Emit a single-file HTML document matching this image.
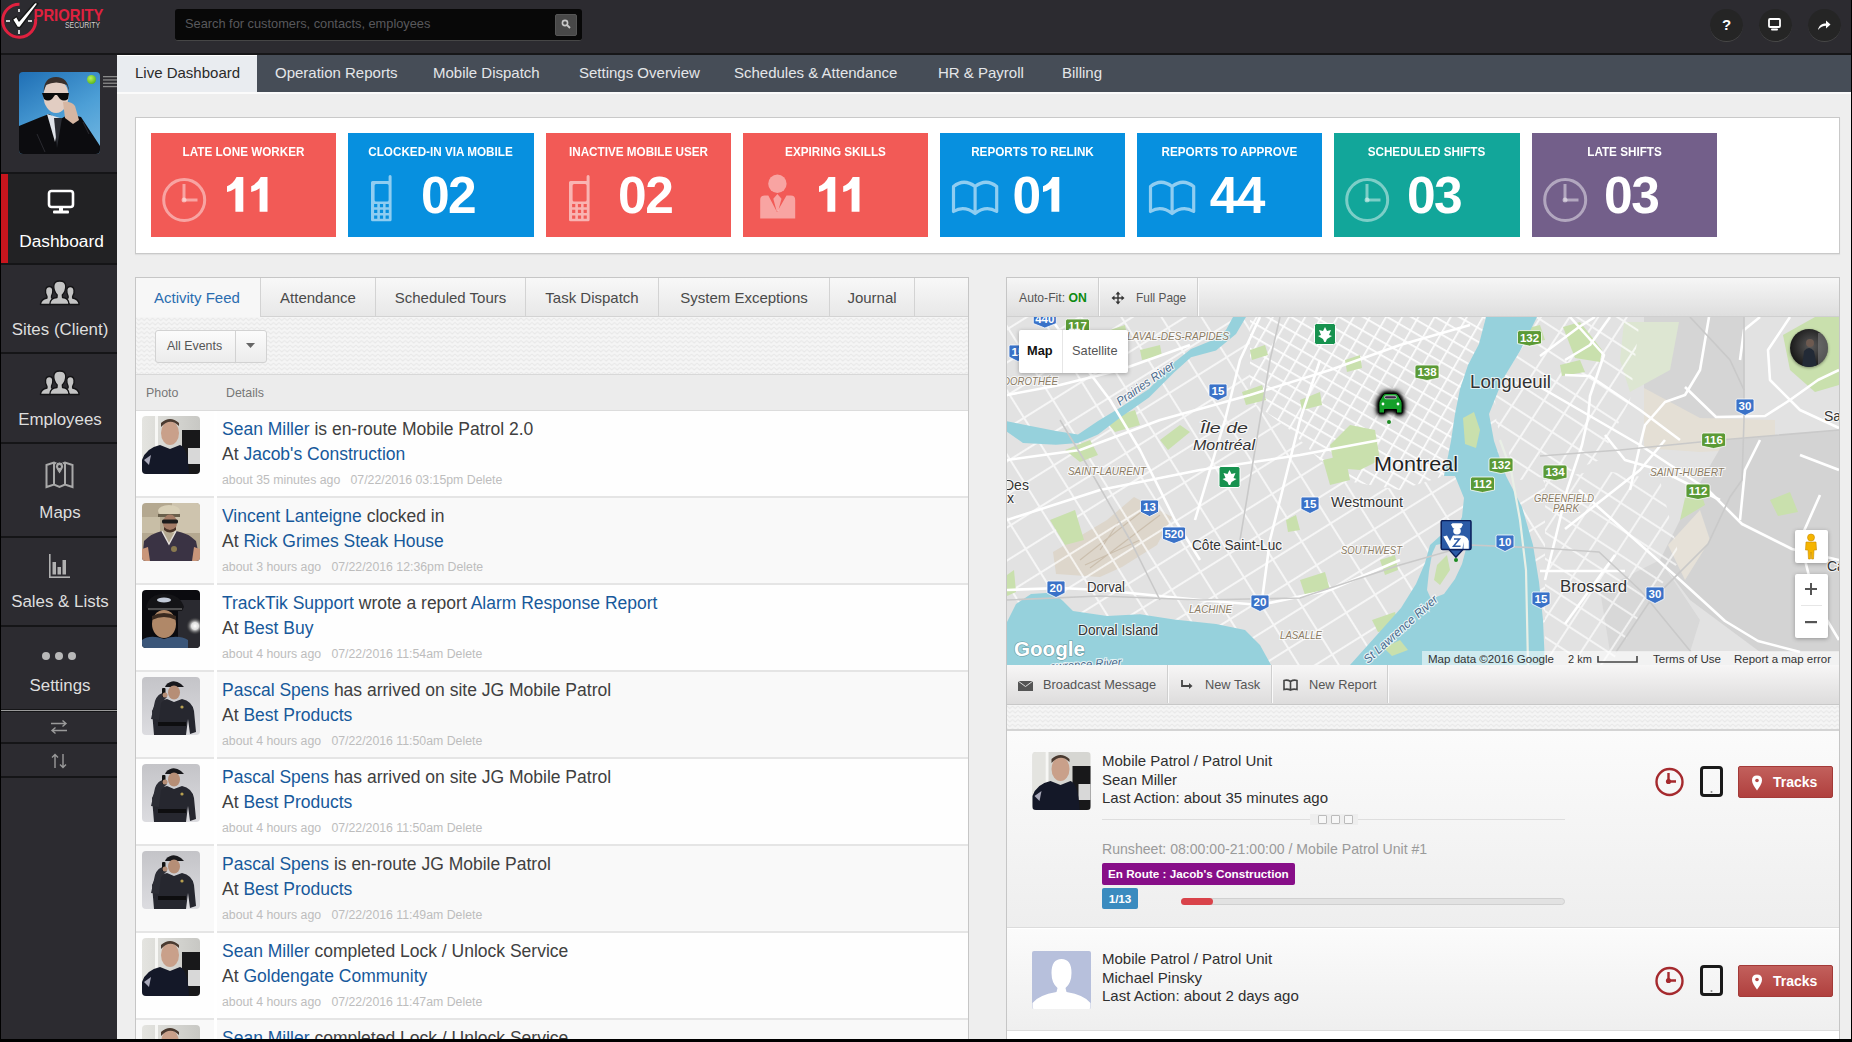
<!DOCTYPE html>
<html><head><meta charset="utf-8">
<style>
*{box-sizing:border-box;margin:0;padding:0}
html,body{width:1852px;height:1042px;overflow:hidden;background:#000}
body{font-family:"Liberation Sans",sans-serif;position:relative}
.abs{position:absolute}
#top{left:1px;top:0;width:1850px;height:53px;background:#2c2b30}
#topline{left:1px;top:53px;width:1850px;height:2px;background:#161618}
#side{left:1px;top:55px;width:116px;height:984px;background:#2c2b30}
#tabbar{left:117px;top:55px;width:1734px;height:37px;background:#464d57}
#content{left:117px;top:92px;width:1734px;height:947px;background:#eeeeee;border-top:2px solid #fbfbfb}
.ttab{position:absolute;top:54px;height:37px;color:#e4e6e9;font-size:15px;line-height:37px;white-space:nowrap}
.sec{position:absolute;left:1px;width:116px;background:#2c2b30;border-bottom:2px solid #151517}
.lbl{position:absolute;left:2px;width:116px;text-align:center;white-space:nowrap;color:#dedede;font-size:16.9px;line-height:20px}
.sec svg{position:absolute}
.panel{position:absolute;background:#fff;border:1px solid #c9c9c9;box-shadow:0 1px 1px rgba(0,0,0,.06)}
.tile{position:absolute;top:133px;width:185.3px;height:104px;color:#fff}
.tile .t{position:absolute;top:11px;left:0;width:185px;text-align:center;font-size:13px;font-weight:bold;white-space:nowrap;line-height:16px;transform:scaleX(.9)}
.tile .n{position:absolute;left:72.5px;top:32px;font-size:51.5px;font-weight:bold;line-height:60px;letter-spacing:-1.5px}
.tile svg{position:absolute}

.fp{position:absolute;left:135px;top:277px;width:834px;height:770px;background:#fff;border:1px solid #c6c6c6}
.ftab{position:absolute;top:278px;height:39px;border-left:1px solid #d3d3d3;background:linear-gradient(#f8f8f8,#e8e8e8);border-bottom:1px solid #d3d3d3;color:#4a4a4a;font-size:15px;line-height:39px;text-align:center;white-space:nowrap}
.zig{background-color:#eeeeee;background-image:repeating-linear-gradient(45deg,rgba(255,255,255,.25) 0 2px,transparent 2px 5px),repeating-linear-gradient(-45deg,rgba(255,255,255,.25) 0 2px,transparent 2px 5px)}
.row{position:absolute;left:136px;width:832px;height:87px;border-bottom:2px solid #e5e5e5}
.row .ph{position:absolute;left:6px;top:5px;width:58px;height:58px;border-radius:4px;overflow:hidden}
.row .div{position:absolute;left:78px;top:0;width:3px;height:87px;background:#fff !important}
.row .l1,.row .l2{position:absolute;left:86px;font-size:17.5px;color:#404040;white-space:nowrap;line-height:20px}
.row .l1{top:8px}.row .l2{top:33px}
.row .l3{position:absolute;left:86px;top:62px;font-size:12.3px;color:#bdbdbd;white-space:nowrap;line-height:14px}
.lk{color:#17599b}
</style></head><body>
<svg width="0" height="0" style="position:absolute"><defs><pattern id="zz" width="5.5" height="4.5" patternUnits="userSpaceOnUse"><path d="M0 1 L2.75 3.5 L5.5 1" fill="none" stroke="#e6e6e6" stroke-width="1"/></pattern></defs></svg>
<div class="abs" id="top"></div>
<div class="abs" id="topline"></div>
<div class="abs" id="side"></div>
<div class="abs" id="tabbar"></div>
<div class="abs" id="content"></div>

<!-- LOGO -->
<svg class="abs" style="left:0;top:0" width="115" height="45" viewBox="0 0 115 45">
  <path d="M19.5 4.2 A16.5 16.5 0 1 0 35.6 19.2" fill="none" stroke="#e0213f" stroke-width="3"/>
  <g stroke="#cfcfcf" stroke-width="2"><line x1="19" y1="9" x2="19" y2="12"/><line x1="19" y1="30" x2="19" y2="34"/><line x1="6" y1="21" x2="10" y2="21"/><line x1="28" y1="21" x2="32" y2="21"/></g>
  <path d="M12.5 19.5 L16.5 16.5 L19 21 L35 2.5 L38 3.5 L20 27.5 L17.5 27.5 Z" fill="#fff" stroke="#151515" stroke-width="1.3" stroke-linejoin="round"/>
  <text x="33.5" y="20.6" font-family="Liberation Sans" font-weight="bold" font-size="16.5" fill="#e0213f" textLength="70" lengthAdjust="spacingAndGlyphs">PRIORITY</text>
  <text x="65" y="27.8" font-family="Liberation Sans" font-size="9" fill="#d4d4d4" stroke="#111" stroke-width=".4" paint-order="stroke" textLength="35" lengthAdjust="spacingAndGlyphs">SECURITY</text>
</svg>

<!-- SEARCH -->
<div class="abs" style="left:175px;top:9px;width:407px;height:32px;background:#080808;border-radius:3px;border-bottom:1px solid #464646"></div>
<div class="abs" style="left:185px;top:16px;font-size:12.8px;color:#58585c;line-height:16px;white-space:nowrap">Search for customers, contacts, employees</div>
<div class="abs" style="left:555px;top:14px;width:22px;height:22px;background:#484848;border-radius:2px;border:1px solid #555"></div>
<svg class="abs" style="left:559px;top:17px" width="14" height="14" viewBox="0 0 14 14"><circle cx="6" cy="6" r="2.6" fill="none" stroke="#c8c8c8" stroke-width="1.6"/><line x1="8" y1="8" x2="11" y2="11" stroke="#c8c8c8" stroke-width="1.8"/></svg>

<!-- top right circles -->
<div class="abs" style="left:1710px;top:9px;width:33px;height:33px;border-radius:50%;background:#252525;border-bottom:1px solid #474747"></div>
<div class="abs" style="left:1759px;top:9px;width:33px;height:33px;border-radius:50%;background:#252525;border-bottom:1px solid #474747"></div>
<div class="abs" style="left:1808px;top:9px;width:33px;height:33px;border-radius:50%;background:#252525;border-bottom:1px solid #474747"></div>
<div class="abs" style="left:1710px;top:15px;width:33px;text-align:center;color:#fff;font-weight:bold;font-size:15px;line-height:20px">?</div>
<svg class="abs" style="left:1767px;top:17px" width="16" height="16" viewBox="0 0 16 16"><rect x="2" y="2" width="11" height="8" rx="1" fill="none" stroke="#fff" stroke-width="1.8"/><rect x="4" y="11.5" width="7" height="2" rx="1" fill="#fff"/></svg>
<svg class="abs" style="left:1816px;top:17px" width="16" height="16" viewBox="0 0 16 16"><path d="M2 13 C3 8 6 6.5 10 6.5 L10 3.5 L14.5 7.5 L10 11.5 L10 8.8 C7 8.8 4.5 9.8 2 13 Z" fill="#fff"/></svg>

<!-- TAB BAR -->
<div class="abs" style="left:117px;top:55px;width:140px;height:37px;background:#e9ecf0;border-top:1px solid #fff"></div>
<div class="ttab" style="left:135px;color:#2a2a2a">Live Dashboard</div>
<div class="ttab" style="left:275px">Operation Reports</div>
<div class="ttab" style="left:433px">Mobile Dispatch</div>
<div class="ttab" style="left:579px">Settings Overview</div>
<div class="ttab" style="left:734px">Schedules &amp; Attendance</div>
<div class="ttab" style="left:938px">HR &amp; Payroll</div>
<div class="ttab" style="left:1062px">Billing</div>

<!-- SIDEBAR -->
<div class="sec" style="top:55px;height:119px"></div>
<div class="abs" style="left:19px;top:72px;width:81px;height:82px;border-radius:4px;overflow:hidden;background:linear-gradient(150deg,#1f6fb5 0%,#4d9fd6 55%,#74b8e2 100%)">
  <svg width="81" height="82" viewBox="0 0 81 82">
    <path d="M0 54 L22 45 L30 42 L40 48 L50 42 L62 45 L81 74 L81 82 L0 82 Z" fill="#0c0c0f"/>
    <path d="M28 42 L36 70 L41 46 Z" fill="#dfe3ea"/>
    <path d="M35 46 L38 76 L43 46 Z" fill="#2a2c33"/>
    <ellipse cx="37" cy="24" rx="12.5" ry="17" fill="#e2cdc2"/>
    <path d="M24.5 20 Q25 5 37 5 Q49 5 50 19 L48 13 Q37 8 27 13 Z" fill="#3a302c"/>
    <path d="M23 21 H50 L49 27 Q45 30 41 27 L38 23 L36 23 L33 27 Q29 30 25 27 Z" fill="#0a0a0a"/>
    <path d="M44 30 Q52 29 56 34 L60 48 L54 52 L46 46 Z" fill="#d6b6a2"/>
    <path d="M18 62 L26 80 M64 50 L70 62" stroke="#2a2a30" stroke-width="1"/>
  </svg>
</div>
<div class="abs" style="left:87px;top:75px;width:9px;height:9px;border-radius:50%;background:radial-gradient(circle at 40% 35%,#b7f35a,#3fa40c)"></div>
<svg class="abs" style="left:103px;top:76px" width="14" height="12" viewBox="0 0 14 12"><g fill="#8a8a8a"><rect x="0" y="0" width="14" height="1.3"/><rect x="0" y="3.3" width="14" height="1.3"/><rect x="0" y="6.6" width="14" height="1.3"/><rect x="0" y="9.9" width="14" height="1.3"/></g></svg>

<div class="sec" style="top:174px;height:91px;background:#222224"></div>
<div class="abs" style="left:1px;top:174px;width:7px;height:89px;background:#c8151d"></div>
<svg class="abs" style="left:47px;top:189px" width="28" height="26" viewBox="0 0 28 26"><rect x="2" y="2" width="24" height="16" rx="2.5" fill="none" stroke="#fff" stroke-width="2.6"/><rect x="12" y="18" width="4" height="4" fill="#fff"/><rect x="6" y="21.5" width="16" height="3" rx="1" fill="#fff"/></svg>
<div class="lbl" style="top:231px;left:3.5px;color:#fff;font-size:17.3px">Dashboard</div>

<div class="sec" style="top:265px;height:89px"></div>
<svg class="abs" style="left:35px;top:275px" width="50" height="35" viewBox="0 0 50 35"><g fill="#c4c4c4" stroke="#141416" stroke-width="1.3" stroke-linejoin="round"><path d="M5.4 29.5 Q6 24 12 23 L12 21.5 Q10 19 10.6 15 Q11 11.5 14.3 11.5 Q17.5 11.5 17.8 15 Q18 18.5 16.5 21 L16.5 23 Q18 23.5 19 24.5 L15 29.5 Z"/><path d="M44.2 29.5 Q43.6 24 37.6 23 L37.6 21.5 Q39.6 19 39 15 Q38.6 11.5 35.3 11.5 Q32.1 11.5 31.8 15 Q31.6 18.5 33.1 21 L33.1 23 Q31.6 23.5 30.6 24.5 L34.6 29.5 Z"/><path d="M14.8 29.5 Q15 23 22 22.5 L22.2 20 Q18.5 16 18.8 11 Q19 6 24.8 6 Q30.5 6 30.7 11 Q31 16 27.3 20 L27.5 22.5 Q34 23 34 29.5 Z"/></g></svg>
<div class="lbl" style="top:320px">Sites (Client)</div>

<div class="sec" style="top:354px;height:90px"></div>
<svg class="abs" style="left:35px;top:365px" width="50" height="35" viewBox="0 0 50 35"><g fill="#c4c4c4" stroke="#141416" stroke-width="1.3" stroke-linejoin="round"><path d="M5.4 29.5 Q6 24 12 23 L12 21.5 Q10 19 10.6 15 Q11 11.5 14.3 11.5 Q17.5 11.5 17.8 15 Q18 18.5 16.5 21 L16.5 23 Q18 23.5 19 24.5 L15 29.5 Z"/><path d="M44.2 29.5 Q43.6 24 37.6 23 L37.6 21.5 Q39.6 19 39 15 Q38.6 11.5 35.3 11.5 Q32.1 11.5 31.8 15 Q31.6 18.5 33.1 21 L33.1 23 Q31.6 23.5 30.6 24.5 L34.6 29.5 Z"/><path d="M14.8 29.5 Q15 23 22 22.5 L22.2 20 Q18.5 16 18.8 11 Q19 6 24.8 6 Q30.5 6 30.7 11 Q31 16 27.3 20 L27.5 22.5 Q34 23 34 29.5 Z"/></g></svg>
<div class="lbl" style="top:410px">Employees</div>

<div class="sec" style="top:444px;height:94px"></div>
<svg class="abs" style="left:45px;top:461px" width="29" height="28" viewBox="0 0 29 28"><path d="M1.5 4 L9 1.5 L14.5 4 L20 1.5 L27.5 4 L27.5 26 L20 23.5 L14.5 26 L9 23.5 L1.5 26 Z M9 1.5 L9 23.5 M20 1.5 L20 23.5" fill="none" stroke="#a9a9a9" stroke-width="2"/><path d="M14.5 1 C11.5 1 10.5 3.5 10.5 5.5 C10.5 8 14.5 13 14.5 13 C14.5 13 18.5 8 18.5 5.5 C18.5 3.5 17.5 1 14.5 1Z" fill="#a9a9a9" stroke="#2c2b30" stroke-width="1"/><circle cx="14.5" cy="5.5" r="1.5" fill="#2c2b30"/></svg>
<div class="lbl" style="top:503px">Maps</div>

<div class="sec" style="top:538px;height:89px"></div>
<svg class="abs" style="left:48px;top:554px" width="22" height="25" viewBox="0 0 22 25"><g fill="#b0b0b0"><rect x="1" y="0" width="1.6" height="24"/><rect x="1" y="22.4" width="21" height="1.6"/><rect x="4.5" y="8" width="3.5" height="12.5"/><rect x="9.5" y="13" width="3.5" height="7.5"/><rect x="14.5" y="6" width="3.5" height="14.5"/></g></svg>
<div class="lbl" style="top:592px">Sales &amp; Lists</div>

<div class="sec" style="top:627px;height:82px;border-bottom:none"></div>
<div class="abs" style="left:42px;top:652px;width:8px;height:8px;border-radius:50%;background:#b8b8b8"></div>
<div class="abs" style="left:55px;top:652px;width:8px;height:8px;border-radius:50%;background:#b8b8b8"></div>
<div class="abs" style="left:68px;top:652px;width:8px;height:8px;border-radius:50%;background:#b8b8b8"></div>
<div class="lbl" style="top:676px">Settings</div>
<div class="abs" style="left:1px;top:709px;width:116px;height:3px;background:#151517;border-top:1px solid #151517"></div>
<div class="abs" style="left:1px;top:710px;width:116px;height:1px;background:#9a9a9a"></div>

<div class="sec" style="top:712px;height:32px"></div>
<svg class="abs" style="left:50px;top:719px" width="18" height="16" viewBox="0 0 18 16"><g stroke="#9a9a9a" stroke-width="1.4" fill="none"><path d="M1 4.5 H16 M12.5 1.5 L16 4.5 L12.5 7.5"/><path d="M17 11.5 H2 M5.5 8.5 L2 11.5 L5.5 14.5"/></g></svg>
<div class="sec" style="top:744px;height:34px"></div>
<svg class="abs" style="left:50px;top:753px" width="18" height="16" viewBox="0 0 18 16"><g stroke="#9a9a9a" stroke-width="1.4" fill="none"><path d="M5 15 V1.5 M2 4.5 L5 1.5 L8 4.5"/><path d="M13 1 V14.5 M10 11.5 L13 14.5 L16 11.5"/></g></svg>


<!-- STATS -->
<div class="panel" style="left:135px;top:117px;width:1705px;height:137px"></div>
<div class="tile" style="left:151.2px;background:#f25a56"><div class="t">LATE LONE WORKER</div><svg style="left:76.3px;top:44px" width="45" height="36" viewBox="0 0 45 36"><path transform="translate(0 0)" d="M0 9.3 Q6.5 6.5 9.5 0 L16.3 0 L16.3 34.7 L8.4 34.7 L8.4 11.2 Q4.5 14 0 15.1 Z" fill="#fff"/><path transform="translate(24.2 0)" d="M0 9.3 Q6.5 6.5 9.5 0 L16.3 0 L16.3 34.7 L8.4 34.7 L8.4 11.2 Q4.5 14 0 15.1 Z" fill="#fff"/></svg><svg style="left:0;top:0" width="185" height="104" viewBox="0 0 185 104"><circle cx="33.2" cy="67" r="20.5" fill="none" stroke="rgba(255,255,255,0.45)" stroke-width="3"/><path d="M33 51 V67 H46.5" fill="none" stroke="rgba(255,255,255,0.45)" stroke-width="3"/><circle cx="33" cy="67" r="2.5" fill="rgba(255,255,255,0.45)"/></svg></div>
<div class="tile" style="left:348.4px;background:#0790df"><div class="t">CLOCKED-IN VIA MOBILE</div><div class="n">02</div><svg style="left:0;top:0" width="185" height="104" viewBox="0 0 185 104"><path fill-rule="evenodd" fill="rgba(255,255,255,0.55)" d="M23 49.5 Q23 48 24.5 48 H40.6 V43.5 Q40.6 42 42.1 42 Q43.6 42 43.6 43.5 V86.7 Q43.6 88.2 42.1 88.2 H24.5 Q23 88.2 23 86.7 Z M26.6 52.5 Q26.6 51 28.1 51 H39.1 Q40.6 51 40.6 52.5 V66.9 Q40.6 68.4 39.1 68.4 H28.1 Q26.6 68.4 26.6 66.9 Z M26.1 71.1 h3.2 v3.2 h-3.2 Z M31.9 71.1 h3.2 v3.2 h-3.2 Z M37.6 71.1 h3.2 v3.2 h-3.2 Z M26.1 76.8 h3.2 v3.2 h-3.2 Z M31.9 76.8 h3.2 v3.2 h-3.2 Z M37.6 76.8 h3.2 v3.2 h-3.2 Z M26.1 82.6 h3.2 v3.2 h-3.2 Z M31.9 82.6 h3.2 v3.2 h-3.2 Z M37.6 82.6 h3.2 v3.2 h-3.2 Z"/></svg></div>
<div class="tile" style="left:545.6px;background:#f25a56"><div class="t">INACTIVE MOBILE USER</div><div class="n">02</div><svg style="left:0;top:0" width="185" height="104" viewBox="0 0 185 104"><path fill-rule="evenodd" fill="rgba(255,255,255,0.55)" d="M23 49.5 Q23 48 24.5 48 H40.6 V43.5 Q40.6 42 42.1 42 Q43.6 42 43.6 43.5 V86.7 Q43.6 88.2 42.1 88.2 H24.5 Q23 88.2 23 86.7 Z M26.6 52.5 Q26.6 51 28.1 51 H39.1 Q40.6 51 40.6 52.5 V66.9 Q40.6 68.4 39.1 68.4 H28.1 Q26.6 68.4 26.6 66.9 Z M26.1 71.1 h3.2 v3.2 h-3.2 Z M31.9 71.1 h3.2 v3.2 h-3.2 Z M37.6 71.1 h3.2 v3.2 h-3.2 Z M26.1 76.8 h3.2 v3.2 h-3.2 Z M31.9 76.8 h3.2 v3.2 h-3.2 Z M37.6 76.8 h3.2 v3.2 h-3.2 Z M26.1 82.6 h3.2 v3.2 h-3.2 Z M31.9 82.6 h3.2 v3.2 h-3.2 Z M37.6 82.6 h3.2 v3.2 h-3.2 Z"/></svg></div>
<div class="tile" style="left:742.8px;background:#f25a56"><div class="t">EXPIRING SKILLS</div><svg style="left:76.3px;top:44px" width="45" height="36" viewBox="0 0 45 36"><path transform="translate(0 0)" d="M0 9.3 Q6.5 6.5 9.5 0 L16.3 0 L16.3 34.7 L8.4 34.7 L8.4 11.2 Q4.5 14 0 15.1 Z" fill="#fff"/><path transform="translate(24.2 0)" d="M0 9.3 Q6.5 6.5 9.5 0 L16.3 0 L16.3 34.7 L8.4 34.7 L8.4 11.2 Q4.5 14 0 15.1 Z" fill="#fff"/></svg><svg style="left:0;top:0" width="185" height="104" viewBox="0 0 185 104"><g fill="rgba(255,255,255,0.45)"><circle cx="34.4" cy="50.7" r="9.2"/><path d="M17.2 85.6 V67 Q17.2 62.6 21.6 62.6 H25.3 L34 79 L43.5 62.6 H47.8 Q52.2 62.6 52.2 67 V85.6 Z"/><path d="M34.4 61 L30.3 65.8 L33.6 78 H35.2 L38.5 65.8 Z"/></g></svg></div>
<div class="tile" style="left:940.0px;background:#0790df"><div class="t">REPORTS TO RELINK</div><div class="n">0</div><svg style="left:103.4px;top:44px" width="20" height="36" viewBox="0 0 20 36"><path transform="translate(0 0)" d="M0 9.3 Q6.5 6.5 9.5 0 L16.3 0 L16.3 34.7 L8.4 34.7 L8.4 11.2 Q4.5 14 0 15.1 Z" fill="#fff"/></svg><svg style="left:0;top:0" width="185" height="104" viewBox="0 0 185 104"><path d="M13.5 53.5 Q24 45 35.1 53.5 Q46 45 56.7 53.5 V78.5 Q46 72 35.1 80.5 Q24 72 13.5 78.5 Z M35.1 53.5 V80.5" fill="none" stroke="rgba(255,255,255,0.55)" stroke-width="3.2" stroke-linejoin="round"/></svg></div>
<div class="tile" style="left:1137.2px;background:#0790df"><div class="t">REPORTS TO APPROVE</div><div class="n">44</div><svg style="left:0;top:0" width="185" height="104" viewBox="0 0 185 104"><path d="M13.5 53.5 Q24 45 35.1 53.5 Q46 45 56.7 53.5 V78.5 Q46 72 35.1 80.5 Q24 72 13.5 78.5 Z M35.1 53.5 V80.5" fill="none" stroke="rgba(255,255,255,0.55)" stroke-width="3.2" stroke-linejoin="round"/></svg></div>
<div class="tile" style="left:1334.4px;background:#12a69a"><div class="t">SCHEDULED SHIFTS</div><div class="n">03</div><svg style="left:0;top:0" width="185" height="104" viewBox="0 0 185 104"><circle cx="33.2" cy="67" r="20.5" fill="none" stroke="rgba(255,255,255,0.45)" stroke-width="3"/><path d="M33 51 V67 H46.5" fill="none" stroke="rgba(255,255,255,0.45)" stroke-width="3"/><circle cx="33" cy="67" r="2.5" fill="rgba(255,255,255,0.45)"/></svg></div>
<div class="tile" style="left:1531.6px;background:#735f8a"><div class="t">LATE SHIFTS</div><div class="n">03</div><svg style="left:0;top:0" width="185" height="104" viewBox="0 0 185 104"><circle cx="33.2" cy="67" r="20.5" fill="none" stroke="rgba(255,255,255,0.45)" stroke-width="3"/><path d="M33 51 V67 H46.5" fill="none" stroke="rgba(255,255,255,0.45)" stroke-width="3"/><circle cx="33" cy="67" r="2.5" fill="rgba(255,255,255,0.45)"/></svg></div>

<!-- FEED -->
<div class="fp"></div>
<div class="abs" style="left:136px;top:278px;width:124px;height:39px;background:#f7f7f7;color:#2a6db0;font-size:15px;line-height:39px;padding-left:18px;white-space:nowrap">Activity Feed</div>
<div class="ftab" style="left:260px;width:115px">Attendance</div>
<div class="ftab" style="left:375px;width:150px">Scheduled Tours</div>
<div class="ftab" style="left:525px;width:133px">Task Dispatch</div>
<div class="ftab" style="left:658px;width:171px">System Exceptions</div>
<div class="ftab" style="left:829px;width:85px">Journal</div>
<div class="ftab" style="left:914px;width:54px"></div>
<div class="abs" style="left:136px;top:316px;width:124px;height:1px;background:#f7f7f7"></div>
<div class="abs" style="left:136px;top:317px;width:832px;height:58px;border-bottom:1px solid #d8d8d8;background:#f5f5f5"><svg width="832" height="57" style="display:block"><rect width="832" height="57" fill="url(#zz)"/></svg></div>
<div class="abs" style="left:155px;top:330px;width:112px;height:33px;border:1px solid #d2d2d2;border-radius:3px;background:linear-gradient(#fbfbfb,#ececec)"></div>
<div class="abs" style="left:235px;top:331px;width:1px;height:31px;background:#d2d2d2"></div>
<div class="abs" style="left:167px;top:339px;font-size:12.4px;color:#555;line-height:14px;white-space:nowrap">All Events</div>
<svg class="abs" style="left:246px;top:343px" width="10" height="6"><path d="M0 0 H9 L4.5 5 Z" fill="#666"/></svg>
<div class="abs" style="left:136px;top:375px;width:832px;height:36px;background:#ececec;border-bottom:1px solid #dcdcdc"></div>
<div class="abs" style="left:146px;top:386px;font-size:12.4px;color:#777;line-height:14px">Photo</div>
<div class="abs" style="left:226px;top:386px;font-size:12.4px;color:#777;line-height:14px">Details</div>
<div class="row" style="top:411px;background:#fefefe"><div class="ph"><svg width="58" height="58" viewBox="0 0 58 58"><defs><linearGradient id="gs" x1="0" x2="1"><stop offset="0" stop-color="#e4e4e0"/><stop offset="1" stop-color="#c8c8c4"/></linearGradient></defs><rect width="58" height="58" fill="url(#gs)"/><rect x="13" y="0" width="3" height="58" fill="#f7f7f5"/><rect x="40" y="14" width="18" height="44" fill="#18181a"/><rect x="46" y="32" width="12" height="16" fill="#d8d8d8"/><ellipse cx="28" cy="17" rx="9" ry="12" fill="#c9a08a"/><path d="M19 11 Q28 1 37 10 L37 7 Q28 -1 19 7Z" fill="#4a3a30"/><path d="M0 44 Q4 32 18 29 L28 33 L38 29 Q46 32 47 58 L0 58Z" fill="#141828"/><path d="M2 44 L9 39 L7 49 Z" fill="#aab"/></svg></div><div class="div" style="background:#fefefe"></div><div class="l1"><span class="lk">Sean Miller</span> is en-route Mobile Patrol 2.0</div><div class="l2">At <span class="lk">Jacob's Construction</span></div><div class="l3">about 35 minutes ago&nbsp;&nbsp; 07/22/2016 03:15pm Delete</div></div>
<div class="row" style="top:498px;background:#f9f9f9"><div class="ph"><svg width="58" height="58" viewBox="0 0 58 58"><rect width="58" height="58" fill="#b4a890"/><rect x="30" y="0" width="28" height="30" fill="#cec4ae"/><rect x="0" y="14" width="18" height="16" fill="#c8bea6"/><ellipse cx="27" cy="8" rx="11" ry="6" fill="#d8cfb6"/><rect x="16" y="11" width="22" height="3" fill="#6a604c"/><ellipse cx="28" cy="20" rx="7" ry="8.5" fill="#a47c66"/><rect x="20" y="16.5" width="16" height="4" rx="1.5" fill="#1c1c1c"/><path d="M22 24 Q28 30 34 24 L34 27 Q28 32 22 27Z" fill="#4a3428"/><path d="M0 58 L2 38 Q10 30 20 28 L27 40 L34 28 Q46 30 54 38 L58 58 Z" fill="#3a3344"/><path d="M20 28 L27 41 L34 28" fill="none" stroke="#e6e0da" stroke-width="1.5"/><path d="M0 46 L6 44 L8 58 H0Z M58 46 L52 44 L50 58 H58Z" fill="#c9967a"/><circle cx="32" cy="46" r="3" fill="#8a7a50"/></svg></div><div class="div" style="background:#f9f9f9"></div><div class="l1"><span class="lk">Vincent Lanteigne</span> clocked in</div><div class="l2">At <span class="lk">Rick Grimes Steak House</span></div><div class="l3">about 3 hours ago&nbsp;&nbsp; 07/22/2016 12:36pm Delete</div></div>
<div class="row" style="top:585px;background:#fefefe"><div class="ph"><svg width="58" height="58" viewBox="0 0 58 58"><defs><radialGradient id="gl"><stop offset="0" stop-color="#fff"/><stop offset=".4" stop-color="#ddd"/><stop offset="1" stop-color="#333" stop-opacity="0"/></radialGradient></defs><rect width="58" height="58" fill="#0b0b0f"/><rect x="36" y="10" width="22" height="48" fill="#2a2a30"/><circle cx="53" cy="36" r="9" fill="url(#gl)"/><path d="M4 17 Q7 4 22 4 Q38 4 42 17 L40 21 H7 Z" fill="#141417"/><ellipse cx="22" cy="10" rx="7" ry="2.5" fill="#c2cad8"/><path d="M6 19 H40" stroke="#888" stroke-width="1"/><ellipse cx="22" cy="34" rx="12" ry="14" fill="#b08868"/><path d="M10 30 Q22 24 34 30 L34 26 Q22 20 10 26Z" fill="#3a2a20"/><path d="M0 58 L0 50 Q8 44 22 49 Q36 44 46 50 L46 58 Z" fill="#3b5679"/></svg></div><div class="div" style="background:#fefefe"></div><div class="l1"><span class="lk">TrackTik Support</span> wrote a report <span class="lk">Alarm Response Report</span></div><div class="l2">At <span class="lk">Best Buy</span></div><div class="l3">about 4 hours ago&nbsp;&nbsp; 07/22/2016 11:54am Delete</div></div>
<div class="row" style="top:672px;background:#f9f9f9"><div class="ph"><svg width="58" height="58" viewBox="0 0 58 58"><defs><linearGradient id="gp" x1="0" y1="0" x2="0" y2="1"><stop offset="0" stop-color="#c4c4c8"/><stop offset="1" stop-color="#dcdce0"/></linearGradient></defs><rect width="58" height="58" fill="url(#gp)"/><path d="M24 8 Q31 1 39 7 L42 10 H23 Z" fill="#18181c"/><ellipse cx="32" cy="15.5" rx="6" ry="7" fill="#b68e76"/><path d="M12 58 L10 34 Q14 24 25 22 L32 25 L40 22 Q50 24 52 34 L54 55 L48 57 L46 42 L44 58 Z" fill="#26272f"/><path d="M9 42 L13 24 Q16 16 22 16 L25 20 L19 26 L17 43 Z" fill="#2c2d35"/><rect x="20" y="11" width="3.5" height="9" rx="1" fill="#111"/><circle cx="23" cy="18" r="2.5" fill="#b68e76"/><rect x="16" y="45" width="28" height="4" fill="#0e0e10"/><circle cx="40" cy="30" r="1.6" fill="#b8a050"/></svg></div><div class="div" style="background:#f9f9f9"></div><div class="l1"><span class="lk">Pascal Spens</span> has arrived on site JG Mobile Patrol</div><div class="l2">At <span class="lk">Best Products</span></div><div class="l3">about 4 hours ago&nbsp;&nbsp; 07/22/2016 11:50am Delete</div></div>
<div class="row" style="top:759px;background:#fefefe"><div class="ph"><svg width="58" height="58" viewBox="0 0 58 58"><defs><linearGradient id="gp" x1="0" y1="0" x2="0" y2="1"><stop offset="0" stop-color="#c4c4c8"/><stop offset="1" stop-color="#dcdce0"/></linearGradient></defs><rect width="58" height="58" fill="url(#gp)"/><path d="M24 8 Q31 1 39 7 L42 10 H23 Z" fill="#18181c"/><ellipse cx="32" cy="15.5" rx="6" ry="7" fill="#b68e76"/><path d="M12 58 L10 34 Q14 24 25 22 L32 25 L40 22 Q50 24 52 34 L54 55 L48 57 L46 42 L44 58 Z" fill="#26272f"/><path d="M9 42 L13 24 Q16 16 22 16 L25 20 L19 26 L17 43 Z" fill="#2c2d35"/><rect x="20" y="11" width="3.5" height="9" rx="1" fill="#111"/><circle cx="23" cy="18" r="2.5" fill="#b68e76"/><rect x="16" y="45" width="28" height="4" fill="#0e0e10"/><circle cx="40" cy="30" r="1.6" fill="#b8a050"/></svg></div><div class="div" style="background:#fefefe"></div><div class="l1"><span class="lk">Pascal Spens</span> has arrived on site JG Mobile Patrol</div><div class="l2">At <span class="lk">Best Products</span></div><div class="l3">about 4 hours ago&nbsp;&nbsp; 07/22/2016 11:50am Delete</div></div>
<div class="row" style="top:846px;background:#f9f9f9"><div class="ph"><svg width="58" height="58" viewBox="0 0 58 58"><defs><linearGradient id="gp" x1="0" y1="0" x2="0" y2="1"><stop offset="0" stop-color="#c4c4c8"/><stop offset="1" stop-color="#dcdce0"/></linearGradient></defs><rect width="58" height="58" fill="url(#gp)"/><path d="M24 8 Q31 1 39 7 L42 10 H23 Z" fill="#18181c"/><ellipse cx="32" cy="15.5" rx="6" ry="7" fill="#b68e76"/><path d="M12 58 L10 34 Q14 24 25 22 L32 25 L40 22 Q50 24 52 34 L54 55 L48 57 L46 42 L44 58 Z" fill="#26272f"/><path d="M9 42 L13 24 Q16 16 22 16 L25 20 L19 26 L17 43 Z" fill="#2c2d35"/><rect x="20" y="11" width="3.5" height="9" rx="1" fill="#111"/><circle cx="23" cy="18" r="2.5" fill="#b68e76"/><rect x="16" y="45" width="28" height="4" fill="#0e0e10"/><circle cx="40" cy="30" r="1.6" fill="#b8a050"/></svg></div><div class="div" style="background:#f9f9f9"></div><div class="l1"><span class="lk">Pascal Spens</span> is en-route JG Mobile Patrol</div><div class="l2">At <span class="lk">Best Products</span></div><div class="l3">about 4 hours ago&nbsp;&nbsp; 07/22/2016 11:49am Delete</div></div>
<div class="row" style="top:933px;background:#fefefe"><div class="ph"><svg width="58" height="58" viewBox="0 0 58 58"><defs><linearGradient id="gs" x1="0" x2="1"><stop offset="0" stop-color="#e4e4e0"/><stop offset="1" stop-color="#c8c8c4"/></linearGradient></defs><rect width="58" height="58" fill="url(#gs)"/><rect x="13" y="0" width="3" height="58" fill="#f7f7f5"/><rect x="40" y="14" width="18" height="44" fill="#18181a"/><rect x="46" y="32" width="12" height="16" fill="#d8d8d8"/><ellipse cx="28" cy="17" rx="9" ry="12" fill="#c9a08a"/><path d="M19 11 Q28 1 37 10 L37 7 Q28 -1 19 7Z" fill="#4a3a30"/><path d="M0 44 Q4 32 18 29 L28 33 L38 29 Q46 32 47 58 L0 58Z" fill="#141828"/><path d="M2 44 L9 39 L7 49 Z" fill="#aab"/></svg></div><div class="div" style="background:#fefefe"></div><div class="l1"><span class="lk">Sean Miller</span> completed Lock / Unlock Service</div><div class="l2">At <span class="lk">Goldengate Community</span></div><div class="l3">about 4 hours ago&nbsp;&nbsp; 07/22/2016 11:47am Delete</div></div>
<div class="row" style="top:1020px;background:#f9f9f9"><div class="ph"><svg width="58" height="58" viewBox="0 0 58 58"><defs><linearGradient id="gs" x1="0" x2="1"><stop offset="0" stop-color="#e4e4e0"/><stop offset="1" stop-color="#c8c8c4"/></linearGradient></defs><rect width="58" height="58" fill="url(#gs)"/><rect x="13" y="0" width="3" height="58" fill="#f7f7f5"/><rect x="40" y="14" width="18" height="44" fill="#18181a"/><rect x="46" y="32" width="12" height="16" fill="#d8d8d8"/><ellipse cx="28" cy="17" rx="9" ry="12" fill="#c9a08a"/><path d="M19 11 Q28 1 37 10 L37 7 Q28 -1 19 7Z" fill="#4a3a30"/><path d="M0 44 Q4 32 18 29 L28 33 L38 29 Q46 32 47 58 L0 58Z" fill="#141828"/><path d="M2 44 L9 39 L7 49 Z" fill="#aab"/></svg></div><div class="div" style="background:#f9f9f9"></div><div class="l1"><span class="lk">Sean Miller</span> completed Lock / Unlock Service</div><div class="l2">At <span class="lk">Goldengate Community</span></div><div class="l3">about 4 hours ago&nbsp;&nbsp; 07/22/2016 11:47am Delete</div></div>
<!-- RIGHT PANEL -->
<div class="abs" style="left:1006px;top:277px;width:834px;height:770px;background:#fff;border:1px solid #c6c6c6"></div>
<div class="abs" style="left:1007px;top:278px;width:832px;height:39px;background:linear-gradient(#f6f6f6,#dedede);border-bottom:1px solid #cfcfcf"></div>
<div class="abs" style="left:1098px;top:278px;width:1px;height:38px;background:#cfcfcf"></div>
<div class="abs" style="left:1099px;top:278px;width:1px;height:38px;background:#fafafa"></div>
<div class="abs" style="left:1197px;top:278px;width:1px;height:38px;background:#cfcfcf"></div>
<div class="abs" style="left:1198px;top:278px;width:1px;height:38px;background:#fafafa"></div>
<div class="abs" style="left:1019px;top:290.5px;font-size:12.2px;color:#555;line-height:14px;white-space:nowrap">Auto-Fit: <b style="color:#0d8a12">ON</b></div>
<svg class="abs" style="left:1111px;top:291px" width="14" height="14" viewBox="0 0 14 14"><g fill="#333"><path d="M7 0.5 L9.5 3.5 H4.5 Z M7 13.5 L9.5 10.5 H4.5 Z M0.5 7 L3.5 4.5 V9.5 Z M13.5 7 L10.5 4.5 V9.5 Z"/><rect x="6.3" y="3" width="1.4" height="8"/><rect x="3" y="6.3" width="8" height="1.4"/></g></svg>
<div class="abs" style="left:1136px;top:290.5px;font-size:11.9px;color:#555;line-height:14px;white-space:nowrap">Full Page</div>
<svg class="abs" style="left:1007px;top:317px" width="832" height="348" viewBox="1007 317 832 348">
<defs><clipPath id="mc"><rect x="1007" y="317" width="832" height="348"/></clipPath><pattern id="grid1" width="14" height="12" patternUnits="userSpaceOnUse" patternTransform="rotate(30)"><path d="M0 0.8 H14 M0.8 0 V12" stroke="#fff" stroke-width="1.7"/></pattern><pattern id="grid2" width="34" height="28" patternUnits="userSpaceOnUse" patternTransform="rotate(-32)"><path d="M0 1 H34 M1 0 V28" stroke="#fff" stroke-width="2"/></pattern><pattern id="grid3" width="24" height="22" patternUnits="userSpaceOnUse" patternTransform="rotate(33)"><path d="M0 1 H24 M1 0 V22" stroke="#fff" stroke-width="2"/></pattern></defs>
<g clip-path="url(#mc)">
<rect x="1007" y="317" width="832" height="348" fill="#e2e2e2"/>
<path d="M1644 317 L1744 317 L1744 416 L1700 420 L1644 390 Z" fill="#d5d5d5"/>
<path d="M1644 388 L1700 418 L1775 420 L1775 448 L1700 452 L1644 448 Z" fill="#e4dfd5"/>
<path d="M1725 440 L1839 430 L1839 652 L1760 652 L1690 600 L1660 560 L1690 500 Z" fill="#d3d3d3"/>
<path d="M1600 590 L1660 560 L1700 620 L1690 652 L1610 652 Z" fill="#d8d8d8"/>
<path d="M1668 545 L1700 510 L1710 540 L1685 580 Z" fill="#e6e1d8"/>
<path d="M1253 317 L1330 317 L1300 360 L1253 390 Z" fill="#dedede"/>
<path d="M1624 322 L1679 322 L1670 370 L1630 392 L1620 360 Z" fill="#dde6d2"/>
<path d="M1053 552 L1107 520 L1134 497 L1172 517 L1157 545 L1122 567 L1100 577 L1056 574 Z" fill="#ddd6cb"/>
<g stroke="#cbbfae" stroke-width="1.2" fill="none"><path d="M1080 560 L1150 505 M1090 568 L1160 515 M1100 550 L1120 520 M1085 565 L1140 540"/></g>
<path d="M1007 317 H1490 L1500 480 L1545 480 L1545 665 H1007 Z" fill="url(#grid2)" opacity=".7"/>
<path d="M1490 317 L1640 317 L1630 400 L1600 460 L1560 475 L1520 480 L1495 420 Z" fill="url(#grid3)" opacity=".7"/>
<path d="M1545 480 L1600 470 L1660 480 L1680 560 L1650 600 L1610 665 L1545 665 Z" fill="url(#grid3)" opacity=".65"/>
<path d="M1250 317 L1486 317 L1479 344 L1468 365 L1455 414 L1451 441 L1444 476 L1400 490 L1340 480 L1290 430 L1250 400 Z" fill="#e2e2e2"/>
<path d="M1250 317 L1486 317 L1479 344 L1468 365 L1455 414 L1451 441 L1444 476 L1400 490 L1340 480 L1290 430 L1250 400 Z" fill="url(#grid1)" opacity=".95"/>
<path d="M1330 445 L1350 425 L1375 430 L1380 460 L1360 470 L1335 468 Z" fill="#c9e0ad"/>
<path d="M1323 460 L1345 455 L1350 480 L1330 485 Z" fill="#c9e0ad"/>
<path d="M1783 335 L1815 317 L1839 317 L1839 385 L1815 392 L1790 370 Z" fill="#c9e0ad"/>
<path d="M1065 450 L1090 440 L1098 455 L1080 462 Z" fill="#c9e0ad"/>
<path d="M1105 420 L1135 410 L1140 425 L1115 432 Z" fill="#c9e0ad"/>
<path d="M1050 520 L1075 510 L1084 540 L1065 545 Z" fill="#c9e0ad"/>
<path d="M1007 575 L1014 570 L1016 592 L1007 596 Z" fill="#c9e0ad"/>
<path d="M1242 392 L1262 385 L1266 400 L1246 405 Z" fill="#c9e0ad"/>
<path d="M1160 440 L1180 425 L1190 432 L1168 450 Z" fill="#c9e0ad"/>
<path d="M1300 580 L1325 572 L1330 590 L1305 595 Z" fill="#c9e0ad"/>
<path d="M1372 620 L1395 612 L1400 628 L1378 632 Z" fill="#c9e0ad"/>
<path d="M1560 365 L1580 360 L1585 372 L1562 376 Z" fill="#c9e0ad"/>
<path d="M1520 330 L1540 325 L1545 340 L1522 344 Z" fill="#c9e0ad"/>
<path d="M1563 327 L1580 322 L1602 350 L1600 362 L1575 358 Z" fill="#c9e0ad"/>
<path d="M1770 500 L1790 492 L1798 512 L1778 516 Z" fill="#c9e0ad"/>
<path d="M1685 498 L1700 490 L1705 505 L1680 520 Z" fill="#c9e0ad"/>
<path d="M1380 560 L1395 555 L1398 570 L1385 575 Z" fill="#c9e0ad"/>
<path d="M1286 520 L1296 515 L1300 530 L1288 532 Z" fill="#c9e0ad"/>
<path d="M1110 330 L1125 325 L1128 340 L1112 342 Z" fill="#c9e0ad"/>
<path d="M1140 350 L1160 345 L1162 356 L1142 360 Z" fill="#c9e0ad"/>
<path d="M1250 350 L1265 345 L1268 355 L1252 360 Z" fill="#c9e0ad"/>
<path d="M1345 360 L1360 355 L1362 368 L1347 372 Z" fill="#c9e0ad"/>
<path d="M1300 400 L1320 392 L1322 405 L1302 410 Z" fill="#c9e0ad"/>
<path d="M1006 624 L1016 604 L1031 594 L1053 592.5 L1063 601 L1073 611 L1107 616 L1140 614.3 L1174 619.4 L1216 624 L1245 630 L1260 645 L1271 665 L1006 665 Z" fill="#96d1dc"/>
<path d="M1006 421 L1023 424.5 L1056 431 L1078 434.6 L1098 421 L1120 407.7 L1149 389 L1174 362.4 L1191 349 L1216 338.8 L1226 330 L1233 317 L1246 317 L1236 334 L1216 350.6 L1191 357.3 L1174 372.4 L1149 397.6 L1120 417.8 L1098 434.6 L1078 443 L1056 444.7 L1023 443 L1006 431 Z" fill="#96d1dc"/>
<path d="M1537 317 L1520 351 L1503 379 L1489 414 L1494 441 L1506 476 L1522 507 L1533 545 L1539 582 L1543 620 L1545 665 L1350 665 L1376 636 L1401 608 L1416 584 L1425 563 L1430 545 L1440 536 L1455 532 L1462 517 L1464 498 L1455 476 L1444 476 L1451 441 L1455 414 L1460 389 L1468 365 L1479 344 L1486 317 Z" fill="#96d1dc"/>
<path d="M1436 545 L1455 541 L1466 549 L1462 564 L1455 579 L1444 594 L1431 599 L1427 590 L1429 571 L1432 554 Z" fill="#e0e0e0"/>
<path d="M1437 565 L1447 555 L1450 570 L1440 585 L1434 580 Z" fill="#c9e0ad"/>
<path d="M1500 440 L1511 470 L1520 520 L1526 570 L1528 665" fill="none" stroke="#e9efe6" stroke-width="2.2"/>
<path d="M1463 418 L1474 412 L1480 430 L1476 448 L1465 444 Z" fill="#c9e0ad"/>
<path d="M1384 648 L1400 640 L1408 650 L1392 656 Z" fill="#c9e0ad"/>
<path d="M1007 460 L1080 450 L1160 420 L1250 395 L1330 370 L1400 345 L1470 325" fill="none" stroke="#fff" stroke-width="2.6" stroke-linejoin="round"/>
<path d="M1007 520 L1100 490 L1200 470 L1300 455 L1380 440" fill="none" stroke="#fff" stroke-width="2.6" stroke-linejoin="round"/>
<path d="M1007 590 L1060 588 L1100 590 L1200 600 L1260 605 L1330 590 L1400 560" fill="none" stroke="#fff" stroke-width="2.6" stroke-linejoin="round"/>
<path d="M1007 395 L1060 385 L1120 370 L1190 345" fill="none" stroke="#fff" stroke-width="2.6" stroke-linejoin="round"/>
<path d="M1050 317 L1080 360 L1110 400 L1140 450 L1175 520 L1200 560" fill="none" stroke="#fff" stroke-width="2.6" stroke-linejoin="round"/>
<path d="M1260 317 L1240 360 L1225 420 L1210 470 L1195 520" fill="none" stroke="#fff" stroke-width="2.6" stroke-linejoin="round"/>
<path d="M1320 360 L1300 420 L1285 480 L1270 540 L1262 600" fill="none" stroke="#fff" stroke-width="2.6" stroke-linejoin="round"/>
<path d="M1540 356 L1579 327 L1595 317" fill="none" stroke="#fff" stroke-width="2.6" stroke-linejoin="round"/>
<path d="M1570 317 L1604 355 L1590 396 L1588 418 L1582 445 L1567 490 L1555 540 L1545 580" fill="none" stroke="#fff" stroke-width="2.6" stroke-linejoin="round"/>
<path d="M1540 387 L1640 445 L1708 490 L1742 524 L1792 549 L1839 560" fill="none" stroke="#fff" stroke-width="2.6" stroke-linejoin="round"/>
<path d="M1565 375 L1590 376 L1640 410 L1680 440" fill="none" stroke="#fff" stroke-width="2.6" stroke-linejoin="round"/>
<path d="M1610 317 L1590 345 L1565 360" fill="none" stroke="#fff" stroke-width="2.6" stroke-linejoin="round"/>
<path d="M1709 317 L1700 370 L1685 395 L1665 402 L1645 425 L1640 445 L1630 490" fill="none" stroke="#fff" stroke-width="2.6" stroke-linejoin="round"/>
<path d="M1685 387 L1716 417 L1765 416 L1790 400 L1818 380 L1839 370" fill="none" stroke="#fff" stroke-width="2.6" stroke-linejoin="round"/>
<path d="M1760 317 L1744 330 L1740 360" fill="none" stroke="#fff" stroke-width="2.6" stroke-linejoin="round"/>
<path d="M1790 317 L1768 350 L1770 380 L1800 410 L1839 428" fill="none" stroke="#fff" stroke-width="2.6" stroke-linejoin="round"/>
<path d="M1579 490 L1679 579 L1725 621 L1758 641 L1800 652" fill="none" stroke="#fff" stroke-width="2.6" stroke-linejoin="round"/>
<path d="M1565 529 L1640 470 L1665 440" fill="none" stroke="#fff" stroke-width="2.6" stroke-linejoin="round"/>
<path d="M1540 571 L1625 571" fill="none" stroke="#fff" stroke-width="2.6" stroke-linejoin="round"/>
<path d="M1565 624 L1615 555" fill="none" stroke="#fff" stroke-width="2.6" stroke-linejoin="round"/>
<path d="M1605 435 L1625 460 L1660 470 L1720 500" fill="none" stroke="#fff" stroke-width="2.6" stroke-linejoin="round"/>
<path d="M1740 520 L1745 470 L1760 440" fill="none" stroke="#fff" stroke-width="2.6" stroke-linejoin="round"/>
<path d="M1800 455 L1839 470" fill="none" stroke="#fff" stroke-width="2.6" stroke-linejoin="round"/>
<path d="M1820 495 L1800 540 L1815 600 L1839 640" fill="none" stroke="#fff" stroke-width="2.6" stroke-linejoin="round"/>
<path d="M1007 600 L1100 596 L1200 600 L1300 598 L1400 565 L1470 545 L1540 548 L1599 552 L1641 591 L1691 652" fill="none" stroke="#c9c9c9" stroke-width="1.6"/>
<path d="M1540 456 L1620 450 L1720 440 L1839 430" fill="none" stroke="#c9c9c9" stroke-width="1.6"/>
<path d="M1744 317 L1744 420 L1742 480 L1730 497 L1708 544 L1648 604 L1616 652" fill="none" stroke="#c9c9c9" stroke-width="1.6"/>
<path d="M1060 420 L1090 470 L1130 540 L1160 600" fill="none" stroke="#c9c9c9" stroke-width="1.6"/>
<path d="M1280 317 L1270 360 L1260 420 L1250 480 L1240 540" fill="none" stroke="#c9c9c9" stroke-width="1.6"/>
<path d="M1690 317 L1730 360 L1744 390" fill="none" stroke="#c9c9c9" stroke-width="1.6"/>
</g>
<path d="M1033.3 313.0 Q1033.3 311.5 1034.8 311.5 L1054.8 311.5 Q1056.3 311.5 1056.3 313.0 L1056.3 323.5 L1044.8 328.0 L1033.3 323.5 Z" fill="#3a72c8" stroke="#fff" stroke-width="0.8"/><text x="1044.8" y="322.8" text-anchor="middle" font-family="Liberation Sans" font-weight="bold" font-size="11.5" fill="#fff">440</text>
<path d="M1065.5 321.0 Q1065.5 319.0 1067.5 319.0 L1087.5 319.0 Q1089.5 319.0 1089.5 321.0 L1089.5 332.0 L1077.5 334.5 L1065.5 332.0 Z" fill="#5b9a36" stroke="#fff" stroke-width="0.8"/><text x="1077.5" y="330.3" text-anchor="middle" font-family="Liberation Sans" font-weight="bold" font-size="11.5" fill="#fff">117</text>
<path d="M1009.0 346.5 Q1009.0 345.0 1010.5 345.0 L1025.5 345.0 Q1027.0 345.0 1027.0 346.5 L1027.0 357.0 L1018 361.5 L1009.0 357.0 Z" fill="#3a72c8" stroke="#fff" stroke-width="0.8"/><text x="1018" y="356.3" text-anchor="middle" font-family="Liberation Sans" font-weight="bold" font-size="11.5" fill="#fff">15</text>
<path d="M1209.0 385.5 Q1209.0 384.0 1210.5 384.0 L1225.5 384.0 Q1227.0 384.0 1227.0 385.5 L1227.0 396.0 L1218 400.5 L1209.0 396.0 Z" fill="#3a72c8" stroke="#fff" stroke-width="0.8"/><text x="1218" y="395.3" text-anchor="middle" font-family="Liberation Sans" font-weight="bold" font-size="11.5" fill="#fff">15</text>
<path d="M1301.0 498.5 Q1301.0 497.0 1302.5 497.0 L1317.5 497.0 Q1319.0 497.0 1319.0 498.5 L1319.0 509.0 L1310 513.5 L1301.0 509.0 Z" fill="#3a72c8" stroke="#fff" stroke-width="0.8"/><text x="1310" y="508.3" text-anchor="middle" font-family="Liberation Sans" font-weight="bold" font-size="11.5" fill="#fff">15</text>
<path d="M1140.5 501.5 Q1140.5 500.0 1142.0 500.0 L1157.0 500.0 Q1158.5 500.0 1158.5 501.5 L1158.5 512.0 L1149.5 516.5 L1140.5 512.0 Z" fill="#3a72c8" stroke="#fff" stroke-width="0.8"/><text x="1149.5" y="511.3" text-anchor="middle" font-family="Liberation Sans" font-weight="bold" font-size="11.5" fill="#fff">13</text>
<path d="M1162.5 528.5 Q1162.5 527.0 1164.0 527.0 L1184.0 527.0 Q1185.5 527.0 1185.5 528.5 L1185.5 539.0 L1174 543.5 L1162.5 539.0 Z" fill="#3a72c8" stroke="#fff" stroke-width="0.8"/><text x="1174" y="538.3" text-anchor="middle" font-family="Liberation Sans" font-weight="bold" font-size="11.5" fill="#fff">520</text>
<path d="M1047.0 582.5 Q1047.0 581.0 1048.5 581.0 L1063.5 581.0 Q1065.0 581.0 1065.0 582.5 L1065.0 593.0 L1056 597.5 L1047.0 593.0 Z" fill="#3a72c8" stroke="#fff" stroke-width="0.8"/><text x="1056" y="592.3" text-anchor="middle" font-family="Liberation Sans" font-weight="bold" font-size="11.5" fill="#fff">20</text>
<path d="M1251.0 596.5 Q1251.0 595.0 1252.5 595.0 L1267.5 595.0 Q1269.0 595.0 1269.0 596.5 L1269.0 607.0 L1260 611.5 L1251.0 607.0 Z" fill="#3a72c8" stroke="#fff" stroke-width="0.8"/><text x="1260" y="606.3" text-anchor="middle" font-family="Liberation Sans" font-weight="bold" font-size="11.5" fill="#fff">20</text>
<rect x="1314.5" y="323.5" width="21" height="21" rx="2" fill="#17924f" stroke="#fff" stroke-width="1"/><path d="M1325 327 L1327 331 L1331 330 L1329 335 L1332 336 L1327 339 L1325.7 342 L1324.3 342 L1323 339 L1318 336 L1321 335 L1319 330 L1323 331 Z" fill="#fff"/>
<rect x="1219.0" y="466.5" width="21" height="21" rx="2" fill="#17924f" stroke="#fff" stroke-width="1"/><path d="M1229.5 470 L1231.5 474 L1235.5 473 L1233.5 478 L1236.5 479 L1231.5 482 L1230.2 485 L1228.8 485 L1227.5 482 L1222.5 479 L1225.5 478 L1223.5 473 L1227.5 474 Z" fill="#fff"/>
<path d="M1517.5 332.6 Q1517.5 330.6 1519.5 330.6 L1539.5 330.6 Q1541.5 330.6 1541.5 332.6 L1541.5 343.6 L1529.5 346.1 L1517.5 343.6 Z" fill="#5b9a36" stroke="#fff" stroke-width="0.8"/><text x="1529.5" y="341.90000000000003" text-anchor="middle" font-family="Liberation Sans" font-weight="bold" font-size="11.5" fill="#fff">132</text>
<path d="M1415.0 367.0 Q1415.0 365.0 1417.0 365.0 L1437.0 365.0 Q1439.0 365.0 1439.0 367.0 L1439.0 378.0 L1427 380.5 L1415.0 378.0 Z" fill="#5b9a36" stroke="#fff" stroke-width="0.8"/><text x="1427" y="376.3" text-anchor="middle" font-family="Liberation Sans" font-weight="bold" font-size="11.5" fill="#fff">138</text>
<path d="M1489.0 460.0 Q1489.0 458.0 1491.0 458.0 L1511.0 458.0 Q1513.0 458.0 1513.0 460.0 L1513.0 471.0 L1501 473.5 L1489.0 471.0 Z" fill="#5b9a36" stroke="#fff" stroke-width="0.8"/><text x="1501" y="469.3" text-anchor="middle" font-family="Liberation Sans" font-weight="bold" font-size="11.5" fill="#fff">132</text>
<path d="M1470.5 479.0 Q1470.5 477.0 1472.5 477.0 L1492.5 477.0 Q1494.5 477.0 1494.5 479.0 L1494.5 490.0 L1482.5 492.5 L1470.5 490.0 Z" fill="#5b9a36" stroke="#fff" stroke-width="0.8"/><text x="1482.5" y="488.3" text-anchor="middle" font-family="Liberation Sans" font-weight="bold" font-size="11.5" fill="#fff">112</text>
<path d="M1543.0 467.0 Q1543.0 465.0 1545.0 465.0 L1565.0 465.0 Q1567.0 465.0 1567.0 467.0 L1567.0 478.0 L1555 480.5 L1543.0 478.0 Z" fill="#5b9a36" stroke="#fff" stroke-width="0.8"/><text x="1555" y="476.3" text-anchor="middle" font-family="Liberation Sans" font-weight="bold" font-size="11.5" fill="#fff">134</text>
<path d="M1736.0 400.5 Q1736.0 399.0 1737.5 399.0 L1752.5 399.0 Q1754.0 399.0 1754.0 400.5 L1754.0 411.0 L1745 415.5 L1736.0 411.0 Z" fill="#3a72c8" stroke="#fff" stroke-width="0.8"/><text x="1745" y="410.3" text-anchor="middle" font-family="Liberation Sans" font-weight="bold" font-size="11.5" fill="#fff">30</text>
<path d="M1701.6 435.0 Q1701.6 433.0 1703.6 433.0 L1723.6 433.0 Q1725.6 433.0 1725.6 435.0 L1725.6 446.0 L1713.6 448.5 L1701.6 446.0 Z" fill="#5b9a36" stroke="#fff" stroke-width="0.8"/><text x="1713.6" y="444.3" text-anchor="middle" font-family="Liberation Sans" font-weight="bold" font-size="11.5" fill="#fff">116</text>
<path d="M1686.0 486.0 Q1686.0 484.0 1688.0 484.0 L1708.0 484.0 Q1710.0 484.0 1710.0 486.0 L1710.0 497.0 L1698 499.5 L1686.0 497.0 Z" fill="#5b9a36" stroke="#fff" stroke-width="0.8"/><text x="1698" y="495.3" text-anchor="middle" font-family="Liberation Sans" font-weight="bold" font-size="11.5" fill="#fff">112</text>
<path d="M1496.0 536.5 Q1496.0 535.0 1497.5 535.0 L1512.5 535.0 Q1514.0 535.0 1514.0 536.5 L1514.0 547.0 L1505 551.5 L1496.0 547.0 Z" fill="#3a72c8" stroke="#fff" stroke-width="0.8"/><text x="1505" y="546.3" text-anchor="middle" font-family="Liberation Sans" font-weight="bold" font-size="11.5" fill="#fff">10</text>
<path d="M1532.0 593.5 Q1532.0 592.0 1533.5 592.0 L1548.5 592.0 Q1550.0 592.0 1550.0 593.5 L1550.0 604.0 L1541 608.5 L1532.0 604.0 Z" fill="#3a72c8" stroke="#fff" stroke-width="0.8"/><text x="1541" y="603.3" text-anchor="middle" font-family="Liberation Sans" font-weight="bold" font-size="11.5" fill="#fff">15</text>
<path d="M1646.0 588.5 Q1646.0 587.0 1647.5 587.0 L1662.5 587.0 Q1664.0 587.0 1664.0 588.5 L1664.0 599.0 L1655 603.5 L1646.0 599.0 Z" fill="#3a72c8" stroke="#fff" stroke-width="0.8"/><text x="1655" y="598.3" text-anchor="middle" font-family="Liberation Sans" font-weight="bold" font-size="11.5" fill="#fff">30</text>
<text x="1127" y="339.5" font-family="Liberation Sans" font-size="10.5" fill="#8b7b63" font-style="italic" font-weight="normal" letter-spacing="0" textLength="102" lengthAdjust="spacingAndGlyphs" text-anchor="start"  stroke="#fff" stroke-width="2.2" paint-order="stroke" stroke-opacity=".75">LAVAL-DES-RAPIDES</text>
<text x="1003" y="384.5" font-family="Liberation Sans" font-size="10.5" fill="#8b7b63" font-style="italic" font-weight="normal" letter-spacing="0" textLength="55" lengthAdjust="spacingAndGlyphs" text-anchor="start"  stroke="#fff" stroke-width="2.2" paint-order="stroke" stroke-opacity=".75">DOROTHÉE</text>
<text x="1068" y="474.5" font-family="Liberation Sans" font-size="10.5" fill="#8b7b63" font-style="italic" font-weight="normal" letter-spacing="0" textLength="78" lengthAdjust="spacingAndGlyphs" text-anchor="start"  stroke="#fff" stroke-width="2.2" paint-order="stroke" stroke-opacity=".75">SAINT-LAURENT</text>
<text x="1341" y="553.5" font-family="Liberation Sans" font-size="10.5" fill="#8b7b63" font-style="italic" font-weight="normal" letter-spacing="0" textLength="61" lengthAdjust="spacingAndGlyphs" text-anchor="start"  stroke="#fff" stroke-width="2.2" paint-order="stroke" stroke-opacity=".75">SOUTHWEST</text>
<text x="1189" y="612.5" font-family="Liberation Sans" font-size="10.5" fill="#8b7b63" font-style="italic" font-weight="normal" letter-spacing="0" textLength="43" lengthAdjust="spacingAndGlyphs" text-anchor="start"  stroke="#fff" stroke-width="2.2" paint-order="stroke" stroke-opacity=".75">LACHINE</text>
<text x="1280" y="638.5" font-family="Liberation Sans" font-size="10.5" fill="#8b7b63" font-style="italic" font-weight="normal" letter-spacing="0" textLength="42" lengthAdjust="spacingAndGlyphs" text-anchor="start"  stroke="#fff" stroke-width="2.2" paint-order="stroke" stroke-opacity=".75">LASALLE</text>
<text x="1534" y="501.5" font-family="Liberation Sans" font-size="10.5" fill="#8b7b63" font-style="italic" font-weight="normal" letter-spacing="0" textLength="60" lengthAdjust="spacingAndGlyphs" text-anchor="start"  stroke="#fff" stroke-width="2.2" paint-order="stroke" stroke-opacity=".75">GREENFIELD</text>
<text x="1553" y="512" font-family="Liberation Sans" font-size="10.5" fill="#8b7b63" font-style="italic" font-weight="normal" letter-spacing="0" textLength="26" lengthAdjust="spacingAndGlyphs" text-anchor="start"  stroke="#fff" stroke-width="2.2" paint-order="stroke" stroke-opacity=".75">PARK</text>
<text x="1650" y="476" font-family="Liberation Sans" font-size="10.5" fill="#8b7b63" font-style="italic" font-weight="normal" letter-spacing="0" textLength="74" lengthAdjust="spacingAndGlyphs" text-anchor="start"  stroke="#fff" stroke-width="2.2" paint-order="stroke" stroke-opacity=".75">SAINT-HUBERT</text>
<text x="1200" y="433" font-family="Liberation Sans" font-size="15" fill="#333" font-style="italic" font-weight="normal" letter-spacing="0" textLength="48" lengthAdjust="spacingAndGlyphs" text-anchor="start"  stroke="#fff" stroke-width="2.2" paint-order="stroke" stroke-opacity=".75">Île de</text>
<text x="1193" y="450" font-family="Liberation Sans" font-size="15" fill="#333" font-style="italic" font-weight="normal" letter-spacing="0" textLength="62" lengthAdjust="spacingAndGlyphs" text-anchor="start"  stroke="#fff" stroke-width="2.2" paint-order="stroke" stroke-opacity=".75">Montréal</text>
<text x="1331" y="507" font-family="Liberation Sans" font-size="14" fill="#333"  font-weight="normal" letter-spacing="0" textLength="72" lengthAdjust="spacingAndGlyphs" text-anchor="start"  stroke="#fff" stroke-width="2.2" paint-order="stroke" stroke-opacity=".75">Westmount</text>
<text x="1374" y="471" font-family="Liberation Sans" font-size="20.5" fill="#222"  font-weight="normal" letter-spacing="0" textLength="84" lengthAdjust="spacingAndGlyphs" text-anchor="start"  stroke="#fff" stroke-width="2.2" paint-order="stroke" stroke-opacity=".75">Montreal</text>
<text x="1192" y="550" font-family="Liberation Sans" font-size="14" fill="#333"  font-weight="normal" letter-spacing="0" textLength="90" lengthAdjust="spacingAndGlyphs" text-anchor="start"  stroke="#fff" stroke-width="2.2" paint-order="stroke" stroke-opacity=".75">Côte Saint-Luc</text>
<text x="1087" y="591.5" font-family="Liberation Sans" font-size="14" fill="#333"  font-weight="normal" letter-spacing="0" textLength="38" lengthAdjust="spacingAndGlyphs" text-anchor="start"  stroke="#fff" stroke-width="2.2" paint-order="stroke" stroke-opacity=".75">Dorval</text>
<text x="1078" y="634.5" font-family="Liberation Sans" font-size="14" fill="#333"  font-weight="normal" letter-spacing="0" textLength="80" lengthAdjust="spacingAndGlyphs" text-anchor="start"  stroke="#fff" stroke-width="2.2" paint-order="stroke" stroke-opacity=".75">Dorval Island</text>
<text x="1470" y="387.5" font-family="Liberation Sans" font-size="18.5" fill="#333"  font-weight="normal" letter-spacing="0" textLength="81" lengthAdjust="spacingAndGlyphs" text-anchor="start"  stroke="#fff" stroke-width="2.2" paint-order="stroke" stroke-opacity=".75">Longueuil</text>
<text x="1560" y="591.5" font-family="Liberation Sans" font-size="17" fill="#333"  font-weight="normal" letter-spacing="0" textLength="67" lengthAdjust="spacingAndGlyphs" text-anchor="start"  stroke="#fff" stroke-width="2.2" paint-order="stroke" stroke-opacity=".75">Brossard</text>
<text x="1824" y="420.5" font-family="Liberation Sans" font-size="14" fill="#333"  font-weight="normal" letter-spacing="0"  text-anchor="start"  stroke="#fff" stroke-width="2.2" paint-order="stroke" stroke-opacity=".75">Sa</text>
<text x="1827" y="570.5" font-family="Liberation Sans" font-size="14" fill="#333"  font-weight="normal" letter-spacing="0"  text-anchor="start"  stroke="#fff" stroke-width="2.2" paint-order="stroke" stroke-opacity=".75">Ca</text>
<text x="1004" y="490" font-family="Liberation Sans" font-size="14" fill="#333"  font-weight="normal" letter-spacing="0"  text-anchor="start"  stroke="#fff" stroke-width="2.2" paint-order="stroke" stroke-opacity=".75">Des</text>
<text x="1004" y="503" font-family="Liberation Sans" font-size="14" fill="#333"  font-weight="normal" letter-spacing="0"  text-anchor="start"  stroke="#fff" stroke-width="2.2" paint-order="stroke" stroke-opacity=".75">ix</text>
<text x="1120" y="406" font-family="Liberation Sans" font-size="12" fill="#4a6a8c" font-style="italic" font-weight="normal" letter-spacing="0" textLength="68" lengthAdjust="spacingAndGlyphs" text-anchor="start" transform="rotate(-35 1120 406)" stroke="#fff" stroke-width="2.2" paint-order="stroke" stroke-opacity=".75">Prairies River</text>
<text x="1368" y="664" font-family="Liberation Sans" font-size="12" fill="#4a6a8c" font-style="italic" font-weight="normal" letter-spacing="0" textLength="95" lengthAdjust="spacingAndGlyphs" text-anchor="start" transform="rotate(-42 1368 664)" stroke="#fff" stroke-width="2.2" paint-order="stroke" stroke-opacity=".75">St Lawrence River</text>
<text x="1050" y="671" font-family="Liberation Sans" font-size="12" fill="#4a6a8c" font-style="italic" font-weight="normal" letter-spacing="0" textLength="72" lengthAdjust="spacingAndGlyphs" text-anchor="start" transform="rotate(-4 1050 671)" stroke="#fff" stroke-width="2.2" paint-order="stroke" stroke-opacity=".75">awrence River</text>
<text x="1014" y="656" font-family="Liberation Sans" font-weight="bold" font-size="21" fill="#fff" stroke="#6a9aa3" stroke-width="1.2" paint-order="stroke" textLength="71" lengthAdjust="spacingAndGlyphs">Google</text>
<rect x="1422" y="651" width="417" height="14" fill="#fff" opacity=".55"/>
<text x="1428" y="663" font-family="Liberation Sans" font-size="11" fill="#333" textLength="126" lengthAdjust="spacingAndGlyphs">Map data ©2016 Google</text>
<text x="1568" y="663" font-family="Liberation Sans" font-size="11" fill="#333">2 km</text>
<path d="M1598 656 V662 H1637 V656" fill="none" stroke="#444" stroke-width="1.6"/>
<text x="1653" y="663" font-family="Liberation Sans" font-size="11" fill="#333" textLength="68" lengthAdjust="spacingAndGlyphs">Terms of Use</text>
<text x="1734" y="663" font-family="Liberation Sans" font-size="11" fill="#333" textLength="97" lengthAdjust="spacingAndGlyphs">Report a map error</text>
</svg>

<div class="abs" style="left:1019px;top:330px;width:109px;height:43px;background:#fff;box-shadow:0 1px 4px rgba(0,0,0,.3);border-radius:2px"></div>
<div class="abs" style="left:1062px;top:330px;width:1px;height:43px;background:#e6e6e6"></div>
<div class="abs" style="left:1027px;top:344px;font-size:12.8px;font-weight:bold;color:#111;line-height:14px">Map</div>
<div class="abs" style="left:1072px;top:344px;font-size:12.8px;color:#555;line-height:14px">Satellite</div>
<div class="abs" style="left:1795px;top:530px;width:33px;height:33px;background:#fff;box-shadow:0 1px 4px rgba(0,0,0,.3);border-radius:2px"></div>
<svg class="abs" style="left:1803px;top:533px" width="16" height="27" viewBox="0 0 16 27"><g fill="#f5b400" stroke="#c98b00" stroke-width=".6"><circle cx="8" cy="4.5" r="3.5"/><path d="M3 9 H13 L13.5 17 H11 L10.5 26 H8.6 L8 19 L7.4 26 H5.5 L5 17 H2.5 Z"/></g></svg>
<div class="abs" style="left:1795px;top:574px;width:33px;height:64px;background:#fff;box-shadow:0 1px 4px rgba(0,0,0,.3);border-radius:2px"></div>
<div class="abs" style="left:1801px;top:605px;width:21px;height:1px;background:#e6e6e6"></div>
<svg class="abs" style="left:1804px;top:582px" width="14" height="14"><path d="M6 1 H8 V6 H13 V8 H8 V13 H6 V8 H1 V6 H6 Z" fill="#555"/></svg>
<svg class="abs" style="left:1804px;top:615px" width="14" height="14"><rect x="1" y="6" width="12" height="2.2" fill="#555"/></svg>
<svg class="abs" style="left:1372px;top:387px;filter:drop-shadow(0 0 1.5px #000) drop-shadow(0 0 2px #000) drop-shadow(0 0 2.5px #000)" width="36" height="34" viewBox="0 0 36 34"><path d="M8 13 L11 8 Q12 6.5 14 6.5 H23 Q25 6.5 26 8 L29 13 Q30.5 14 30 22 V26 H24.5 V22.5 H12.5 V26 H7 V22 Q6.5 14 8 13 Z" fill="#14a02a" stroke="#000" stroke-width="1"/><rect x="12.5" y="8.8" width="12" height="3" rx="1.5" fill="#40284a" stroke="#fff" stroke-width=".6"/><circle cx="11" cy="17" r="1.4" fill="#fff"/><circle cx="26" cy="17" r="1.4" fill="#fff"/></svg>
<div class="abs" style="left:1387px;top:420px;width:4px;height:4px;border-radius:50%;background:#1a8a20"></div>
<svg class="abs" style="left:1440px;top:520px" width="32" height="40" viewBox="0 0 32 40"><path d="M9 29.6 L15.9 37.3 L22.8 29.6 Z" fill="#2b5aa6" stroke="#0b1f5a" stroke-width="1.4"/><rect x="1.2" y="0.6" width="29.8" height="29" rx="1.5" fill="#2b5aa6" stroke="#0b1f5a" stroke-width="1.5"/><path d="M11 4.5 L12.5 3.2 H21.5 L23 4.5 L21 8.2 H13 Z" fill="#fff"/><ellipse cx="17" cy="11" rx="3.8" ry="3.4" fill="#fff"/><path d="M3.3 16.5 L7 15.5 L10 21 L13 15.5 H21 Q27 15.5 28.8 21 V28.7 H23.5 V22 L22.5 28.7 H10 L8 25 Z" fill="#fff"/><path d="M14 19 H19.5 L13.5 26.3 H20.5" fill="none" stroke="#2b5aa6" stroke-width="1.5"/></svg>
<div class="abs" style="left:1454px;top:558px;width:4px;height:4px;border-radius:50%;background:#1a8a20"></div>
<div class="abs" style="left:1790px;top:329px;width:38px;height:38px;border-radius:50%;overflow:hidden;background:radial-gradient(circle at 55% 45%,#5a5a5a,#1a1a1a 70%);box-shadow:0 1px 3px rgba(0,0,0,.4)"><svg width="38" height="38"><path d="M12 38 L14 22 Q19 16 24 22 L27 38Z" fill="#222a36"/><circle cx="20" cy="14" r="4" fill="#6d5a50"/><rect x="28" y="4" width="10" height="34" fill="#8a8a8a" opacity=".5"/></svg></div>
<div class="abs" style="left:1007px;top:665px;width:832px;height:40px;background:linear-gradient(#f7f6f6,#dddcdc);border-bottom:1.5px solid #c8c8c8"></div>
<div class="abs" style="left:1167px;top:665px;width:1px;height:38px;background:#cfcfcf"></div><div class="abs" style="left:1168px;top:665px;width:1px;height:38px;background:#fafafa"></div>
<div class="abs" style="left:1271px;top:665px;width:1px;height:38px;background:#cfcfcf"></div><div class="abs" style="left:1272px;top:665px;width:1px;height:38px;background:#fafafa"></div>
<div class="abs" style="left:1387px;top:665px;width:1px;height:38px;background:#cfcfcf"></div><div class="abs" style="left:1388px;top:665px;width:1px;height:38px;background:#fafafa"></div>
<svg class="abs" style="left:1018px;top:681px" width="15" height="10" viewBox="0 0 15 10"><rect x="0" y="0" width="15" height="10" fill="#555"/><path d="M0 0 L7.5 5.5 L15 0" fill="none" stroke="#ddd" stroke-width="1"/></svg>
<div class="abs" style="left:1043px;top:678px;font-size:12.8px;color:#555;line-height:14px;white-space:nowrap">Broadcast Message</div>
<svg class="abs" style="left:1180px;top:679px" width="14" height="12" viewBox="0 0 14 12"><path d="M2 1 V7 H10" fill="none" stroke="#444" stroke-width="1.8"/><path d="M9 4 L12.5 7 L9 10 Z" fill="#444"/></svg>
<div class="abs" style="left:1205px;top:678px;font-size:12.8px;color:#555;line-height:14px;white-space:nowrap">New Task</div>
<svg class="abs" style="left:1283px;top:679px" width="15" height="12" viewBox="0 0 15 12"><path d="M7.5 2.5 Q4.5 0.5 1 1.5 V10.5 Q4.5 9.5 7.5 11 Q10.5 9.5 14 10.5 V1.5 Q10.5 0.5 7.5 2.5 Z M7.5 2.5 V11" fill="none" stroke="#444" stroke-width="1.6"/></svg>
<div class="abs" style="left:1309px;top:678px;font-size:12.8px;color:#555;line-height:14px;white-space:nowrap">New Report</div>
<div class="abs" style="left:1007px;top:705px;width:832px;height:26px;border-bottom:2px solid #d4d4d4;background:#f5f5f5"><svg width="832" height="24" style="display:block"><rect width="832" height="24" fill="url(#zz)"/></svg></div>
<div class="abs" style="left:1007px;top:731px;width:832px;height:197px;background:linear-gradient(#fbfbfb,#eeeeee);border-bottom:1px solid #dcdcdc"></div>
<div class="abs" style="left:1007px;top:929px;width:832px;height:102px;background:linear-gradient(#fbfbfb,#efefef);border-bottom:1px solid #dcdcdc"></div>
<div class="abs" style="left:1032px;top:752px;width:59px;height:58px;border-radius:4px;overflow:hidden"><svg width="59" height="58" viewBox="0 0 58 58"><rect width="58" height="58" fill="#d6d6d2"/><rect x="0" y="0" width="13" height="58" fill="#e4e4e0"/><rect x="13" y="0" width="3" height="58" fill="#f7f7f5"/><rect x="40" y="14" width="18" height="44" fill="#18181a"/><rect x="46" y="32" width="12" height="16" fill="#d8d8d8"/><ellipse cx="28" cy="17" rx="9" ry="12" fill="#c9a08a"/><path d="M19 11 Q28 1 37 10 L37 7 Q28 -1 19 7Z" fill="#4a3a30"/><path d="M0 44 Q4 32 18 29 L28 33 L38 29 Q46 32 47 58 L0 58Z" fill="#141828"/><path d="M2 44 L9 39 L7 49 Z" fill="#aab"/></svg></div>
<div class="abs" style="left:1102px;top:752px;font-size:15px;color:#2f2f2f;line-height:18px;white-space:nowrap">Mobile Patrol / Patrol Unit</div>
<div class="abs" style="left:1102px;top:771px;font-size:15px;color:#2f2f2f;line-height:18px;white-space:nowrap">Sean Miller</div>
<div class="abs" style="left:1102px;top:789px;font-size:15px;color:#2f2f2f;line-height:18px;white-space:nowrap">Last Action: about 35 minutes ago</div>
<div class="abs" style="left:1102px;top:819px;width:463px;height:1px;background:#dedede"></div>
<div class="abs" style="left:1310px;top:814px;width:48px;height:11px;background:#eee"></div>
<div class="abs" style="left:1318px;top:815px;width:9px;height:9px;border:1px solid #bbb;border-radius:1px;background:#f7f7f7"></div>
<div class="abs" style="left:1331px;top:815px;width:9px;height:9px;border:1px solid #bbb;border-radius:1px;background:#f7f7f7"></div>
<div class="abs" style="left:1344px;top:815px;width:9px;height:9px;border:1px solid #bbb;border-radius:1px;background:#f7f7f7"></div>
<div class="abs" style="left:1102px;top:841px;font-size:14.1px;color:#9a9a9a;line-height:16px;white-space:nowrap">Runsheet: 08:00:00-21:00:00 / Mobile Patrol Unit #1</div>
<div class="abs" style="left:1102px;top:863px;width:193px;height:22px;background:#870e88;border-radius:2px;color:#fff;font-weight:bold;font-size:11.7px;line-height:22px;padding-left:6px;white-space:nowrap">En Route : Jacob's Construction</div>
<div class="abs" style="left:1102px;top:888px;width:36px;height:21px;background:#3a8bbf;border-radius:2px;color:#fff;font-weight:bold;font-size:11.7px;line-height:21px;text-align:center">1/13</div>
<div class="abs" style="left:1181px;top:898px;width:384px;height:7px;border-radius:4px;background:#e2e2e2;border:1px solid #d0d0d0"></div>
<div class="abs" style="left:1181px;top:898px;width:32px;height:7px;border-radius:4px;background:#d9434a"></div>
<div class="abs" style="left:1032px;top:951px;width:59px;height:58px;border-radius:2px;overflow:hidden;background:#b7c0dc"><svg width="59" height="58" viewBox="0 0 58 58"><path d="M29 8 Q39 8 39 22 Q39 32 33 37 L34 41 Q52 44 58 52 V58 H0 V52 Q6 44 24 41 L25 37 Q19 32 19 22 Q19 8 29 8 Z" fill="#fff"/></svg></div>
<div class="abs" style="left:1102px;top:950px;font-size:15px;color:#2f2f2f;line-height:18px;white-space:nowrap">Mobile Patrol / Patrol Unit</div>
<div class="abs" style="left:1102px;top:969px;font-size:15px;color:#2f2f2f;line-height:18px;white-space:nowrap">Michael Pinsky</div>
<div class="abs" style="left:1102px;top:987px;font-size:15px;color:#2f2f2f;line-height:18px;white-space:nowrap">Last Action: about 2 days ago</div>
<svg class="abs" style="left:1654px;top:767px" width="31" height="30" viewBox="0 0 31 30"><circle cx="15.5" cy="15" r="13" fill="none" stroke="#a52a2e" stroke-width="2.4"/><path d="M14.5 6 V14.5 H22" fill="none" stroke="#a52a2e" stroke-width="2.4"/><circle cx="14.5" cy="14.5" r="2.6" fill="#a52a2e"/></svg>
<svg class="abs" style="left:1700px;top:766px" width="23" height="31" viewBox="0 0 23 31"><rect x="1.5" y="1.5" width="20" height="28" rx="2.5" fill="none" stroke="#1a1a1a" stroke-width="3"/><circle cx="11.5" cy="26" r="1" fill="#888"/></svg>
<div class="abs" style="left:1738px;top:766px;width:95px;height:32px;border-radius:2px;background:linear-gradient(#c2605c,#b0403e);border:1px solid #a33a38;color:#fff;font-weight:bold;font-size:14px;line-height:30px;padding-left:34px">Tracks</div>
<svg class="abs" style="left:1751px;top:775px" width="12" height="16" viewBox="0 0 12 16"><path d="M6 0.5 Q11 0.5 11 5.5 Q11 9 6 15.5 Q1 9 1 5.5 Q1 0.5 6 0.5 Z" fill="#fff"/><circle cx="6" cy="5.5" r="1.8" fill="#b74a47"/></svg>
<svg class="abs" style="left:1654px;top:966px" width="31" height="30" viewBox="0 0 31 30"><circle cx="15.5" cy="15" r="13" fill="none" stroke="#a52a2e" stroke-width="2.4"/><path d="M14.5 6 V14.5 H22" fill="none" stroke="#a52a2e" stroke-width="2.4"/><circle cx="14.5" cy="14.5" r="2.6" fill="#a52a2e"/></svg>
<svg class="abs" style="left:1700px;top:965px" width="23" height="31" viewBox="0 0 23 31"><rect x="1.5" y="1.5" width="20" height="28" rx="2.5" fill="none" stroke="#1a1a1a" stroke-width="3"/><circle cx="11.5" cy="26" r="1" fill="#888"/></svg>
<div class="abs" style="left:1738px;top:965px;width:95px;height:32px;border-radius:2px;background:linear-gradient(#c2605c,#b0403e);border:1px solid #a33a38;color:#fff;font-weight:bold;font-size:14px;line-height:30px;padding-left:34px">Tracks</div>
<svg class="abs" style="left:1751px;top:974px" width="12" height="16" viewBox="0 0 12 16"><path d="M6 0.5 Q11 0.5 11 5.5 Q11 9 6 15.5 Q1 9 1 5.5 Q1 0.5 6 0.5 Z" fill="#fff"/><circle cx="6" cy="5.5" r="1.8" fill="#b74a47"/></svg>
<div class="abs" style="left:0;top:1039px;width:1852px;height:3px;background:#000;z-index:50"></div>
<div class="abs" style="left:0;top:0;width:1px;height:1042px;background:#000;z-index:50"></div>
<div class="abs" style="left:1851px;top:0;width:1px;height:1042px;background:#000;z-index:50"></div>
</body></html>
